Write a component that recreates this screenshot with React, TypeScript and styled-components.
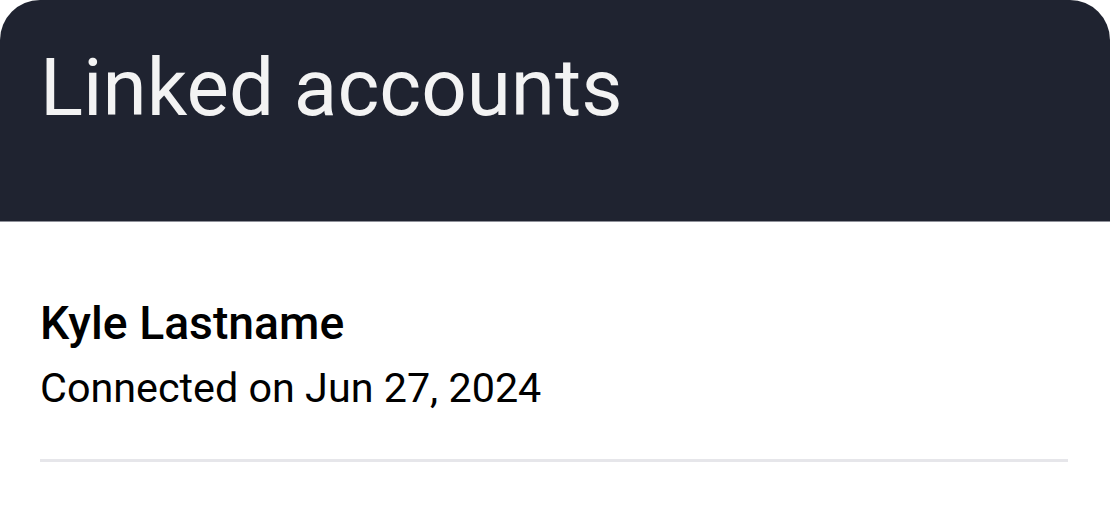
import React from "react";
import styled, { createGlobalStyle } from "styled-components";

const Global = createGlobalStyle`
  html, body { margin: 0; padding: 0; background: #ffffff; }
  body { font-family: Roboto, "Noto Sans", sans-serif; }
`;

const Screen = styled.div`
  width: 1110px;
  height: 518px;
  background: #ffffff;
  overflow: hidden;
  display: flex;
  flex-direction: column;
`;

const Header = styled.header`
  height: 222px;
  box-sizing: border-box;
  background: #1f2330;
  border-radius: 40px 40px 0 0;
  padding: 40px 40px 0 40px;
  border-bottom: 1px solid #8e9099;
`;

const Title = styled.h1`
  margin: 0;
  font-family: Roboto, sans-serif;
  font-weight: 400;
  font-size: 80px;
  line-height: 96px;
  color: #f3f3f3;
  letter-spacing: 0;
`;

const Body = styled.main`
  padding: 74px 42px 0 40px;
`;

const Account = styled.div`
  display: flex;
  flex-direction: column;
  gap: 14px;
  padding-bottom: 47px;
  border-bottom: 3px solid #e6e6ea;
`;

const Name = styled.div`
  font-family: Roboto, sans-serif;
  font-weight: 500;
  font-size: 46.3px;
  line-height: 54px;
  color: #000000;
`;

const Meta = styled.div`
  font-family: Roboto, sans-serif;
  font-weight: 400;
  font-size: 41.3px;
  line-height: 48px;
  color: #000000;
`;

export default function App() {
  return (
    <Screen>
      <Global />
      <Header>
        <Title>Linked accounts</Title>
      </Header>
      <Body>
        <Account>
          <Name>Kyle Lastname</Name>
          <Meta>Connected on Jun 27, 2024</Meta>
        </Account>
      </Body>
    </Screen>
  );
}
